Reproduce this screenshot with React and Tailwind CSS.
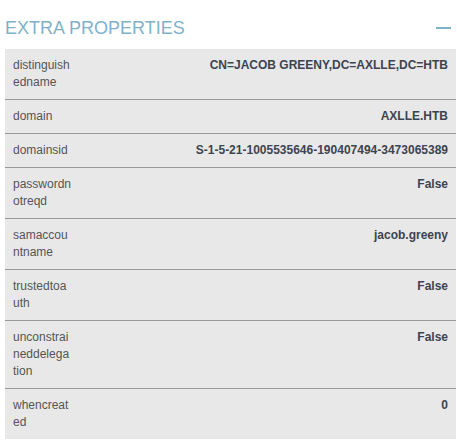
import React from 'react';

const props = [
  { key: 'distinguishedname', value: 'CN=JACOB GREENY,DC=AXLLE,DC=HTB' },
  { key: 'domain', value: 'AXLLE.HTB' },
  { key: 'domainsid', value: 'S-1-5-21-1005535646-190407494-3473065389' },
  { key: 'passwordnotreqd', value: 'False' },
  { key: 'samaccountname', value: 'jacob.greeny' },
  { key: 'trustedtoauth', value: 'False' },
  { key: 'unconstraineddelegation', value: 'False' },
  { key: 'whencreated', value: '0' },
];

const App = () => {
  return (
    <div className="w-[457px] h-[444px] bg-white pl-[5px] font-['Liberation_Sans',Arial,sans-serif] overflow-hidden">
      {/* Header */}
      <div className="flex items-start justify-between pt-[18px] pb-[11px] pr-[6px]">
        <h2 className="text-[18px] leading-[20px] text-[#7fb2c9] tracking-[0px]">EXTRA PROPERTIES</h2>
        <div className="w-[15px] h-[2px] bg-[#7fb2c9] mt-[9px]" />
      </div>

      {/* Properties table */}
      <div className="w-[451px] bg-[#e8e8e8]">
        {props.map((p, idx) => (
          <div
            key={p.key}
            className={`flex items-start text-[12px] leading-[17px] py-[8px] px-[8px] ${
              idx < props.length - 1 ? 'border-b border-[#9a9a9a]' : ''
            }`}
          >
            <div className="w-[58.5px] shrink-0 break-all text-[#555555]">{p.key}</div>
            <div className="flex-1 text-right font-bold text-[#3d4450]">{p.value}</div>
          </div>
        ))}
      </div>
    </div>
  );
};

export default App;
